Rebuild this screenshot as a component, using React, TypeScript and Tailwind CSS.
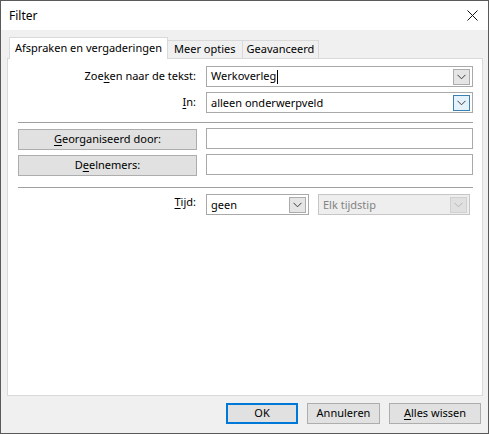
import React from "react";

const Chevron = ({ color = "#3c3c3c" }: { color?: string }) => (
  <svg width="9" height="6" viewBox="0 0 9 6" className="block">
    <path d="M0.5 0.8 L4.5 4.8 L8.5 0.8" fill="none" stroke={color} strokeWidth="1" />
  </svg>
);

function Combo({
  value,
  btn,
  width,
  disabled,
}: {
  value: string;
  btn: "gray" | "blue" | "disabled";
  width: string;
  disabled?: boolean;
}) {
  const btnCls =
    btn === "blue"
      ? "bg-[#e5f1fb] border-[#3c7fb1]"
      : btn === "gray"
      ? "bg-[#e5e5e5] border-[#acacac]"
      : "bg-[#e0e0e0] border-[#d0d0d0]";
  return (
    <div
      className={`${width} h-[21px] flex items-center justify-between border pl-[4px] pr-[2px] ${
        disabled ? "bg-[#eeeeee] border-[#c6c6c6] text-[#838383]" : "bg-white border-[#a9a9a9] text-black"
      }`}
    >
      <span className="leading-none">{value}</span>
      <div className={`w-[17px] h-[16px] border flex items-center justify-center ${btnCls}`}>
        <Chevron color={disabled ? "#b5b5b5" : "#3c3c3c"} />
      </div>
    </div>
  );
}

export default function App() {
  return (
    <div
      className="w-[489px] h-[434px] border border-[#5a5a5a] bg-[#f0f0f0] flex flex-col text-[11px] text-black overflow-hidden"
      style={{ fontFamily: '"Noto Sans", "Open Sans", sans-serif' }}
    >
      {/* title bar */}
      <div className="h-[29px] bg-white flex items-center justify-between pl-[8px] pr-[10px] shrink-0 text-[12px]">
        <span>Filter</span>
        <svg width="11" height="11" viewBox="0 0 11 11">
          <path d="M0.5 0.5 L10.5 10.5 M10.5 0.5 L0.5 10.5" stroke="#111" strokeWidth="1" />
        </svg>
      </div>

      <div className="flex-1 flex flex-col pl-[6px] pr-[5px] pt-[7px]">
        {/* tabs */}
        <div className="flex items-end h-[21px] relative z-10 pl-[2px]">
          <div className="h-[22px] px-[5px] border border-b-0 border-[#d9d9d9] bg-white flex items-center -mb-px">
            Afspraken en vergaderingen
          </div>
          <div className="h-[18px] px-[6px] border border-l-0 border-b-0 border-[#d9d9d9] bg-[#f0f0f0] flex items-center">
            Meer opties
          </div>
          <div className="h-[18px] px-[4px] border border-l-0 border-b-0 border-[#d9d9d9] bg-[#f0f0f0] flex items-center">
            Geavanceerd
          </div>
        </div>

        {/* panel */}
        <div className="h-[338px] border border-[#d9d9d9] bg-white pl-[10px] pr-[9px] pt-[7px] flex flex-col">
          <div className="flex items-center h-[21px]">
            <div className="w-[179px] text-right pr-[1px]">
              Zoe<span className="underline underline-offset-2">k</span>en naar de tekst:
            </div>
            <div className="ml-[9px] flex-1 h-[21px] border border-[#a9a9a9] flex items-center justify-between pl-[4px] pr-[2px]">
              <span className="flex items-center">
                Werkoverleg<span className="inline-block w-px h-[14px] bg-black ml-[1px]" />
              </span>
              <div className="w-[17px] h-[16px] border flex items-center justify-center bg-[#e5e5e5] border-[#acacac]">
                <Chevron />
              </div>
            </div>
          </div>
          <div className="flex items-center h-[21px] mt-[5px]">
            <div className="w-[179px] text-right pr-[1px]">
              <span className="underline underline-offset-2">I</span>n:
            </div>
            <div className="ml-[9px] flex-1">
              <Combo value="alleen onderwerpveld" btn="blue" width="w-full" />
            </div>
          </div>

          <div className="h-px bg-[#a0a0a0] mt-[9px]" />

          <div className="flex items-center mt-[6px] h-[21px]">
            <div className="w-[179px] h-[21px] bg-[#e1e1e1] border border-[#adadad] flex items-center justify-center">
              <span>
                <span className="underline underline-offset-2">G</span>eorganiseerd door:
              </span>
            </div>
            <div className="ml-[9px] flex-1 h-[21px] border border-[#a9a9a9] -mt-[2px]" />
          </div>
          <div className="flex items-center mt-[5px] h-[21px]">
            <div className="w-[179px] h-[21px] bg-[#e1e1e1] border border-[#adadad] flex items-center justify-center">
              <span>
                D<span className="underline underline-offset-2">e</span>elnemers:
              </span>
            </div>
            <div className="ml-[9px] flex-1 h-[21px] border border-[#a9a9a9] -mt-[2px]" />
          </div>

          <div className="h-px bg-[#a0a0a0] mt-[11px]" />

          <div className="flex items-start mt-[6px]">
            <div className="w-[179px] text-right pr-[1px] h-[21px] flex items-center justify-end -mt-[2px]">
              <span>
                <span className="underline underline-offset-2">T</span>ijd:
              </span>
            </div>
            <div className="ml-[9px] flex gap-[9px]">
              <Combo value="geen" btn="gray" width="w-[103px]" />
              <Combo value="Elk tijdstip" btn="disabled" width="w-[152px]" disabled />
            </div>
          </div>
        </div>

        {/* footer */}
        <div className="flex justify-end gap-[9px] pt-[7px] pr-[2px]">
          <button className="w-[72px] h-[21px] bg-[#e1e1e1] border-2 border-[#0078d7] flex items-center justify-center">
            OK
          </button>
          <button className="w-[73px] h-[21px] bg-[#e1e1e1] border border-[#adadad] flex items-center justify-center">
            Annuleren
          </button>
          <button className="w-[92px] h-[21px] bg-[#e1e1e1] border border-[#adadad] flex items-center justify-center">
            <span>
              <span className="underline underline-offset-2">A</span>lles wissen
            </span>
          </button>
        </div>
      </div>
    </div>
  );
}
